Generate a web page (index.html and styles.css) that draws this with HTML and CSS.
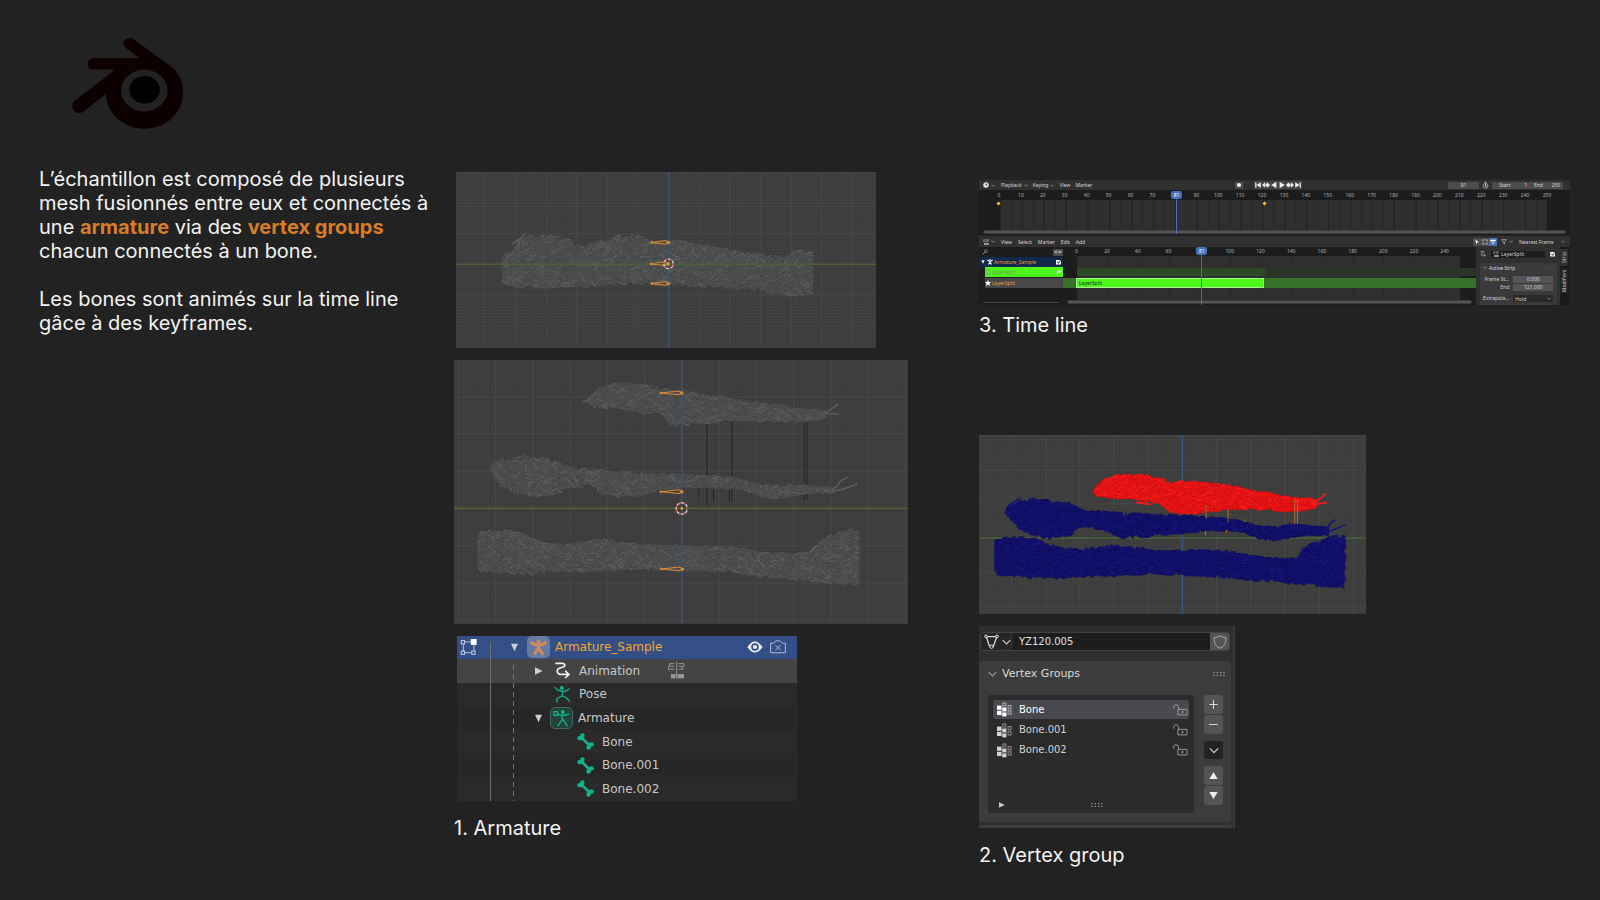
FILE: index.html
```html
<!DOCTYPE html>
<html lang="fr">
<head>
<meta charset="utf-8">
<title>Armature et vertex groups</title>
<link rel="stylesheet" href="styles.css">
</head>
<body>
<svg class="defs" aria-hidden="true">
  <symbol id="i-bone" viewBox="0 0 50 50"><path d="M15 15 L36 36" stroke="currentColor" stroke-width="8"/><g fill="currentColor"><circle cx="7" cy="15" r="6.500"/><circle cx="16" cy="7" r="6.500"/><circle cx="14" cy="15" r="7"/><circle cx="43" cy="34" r="6.500"/><circle cx="34" cy="43" r="6.500"/><circle cx="36" cy="36" r="7"/></g></symbol>
  <symbol id="i-man" viewBox="0 0 50 50"><circle cx="25" cy="7" r="6" fill="currentColor"/><path d="M2 9 L15 17 L35 17 L48 9 M25 18 V29 M24 28 L12 46 M26 28 L38 46" fill="none" stroke="currentColor" stroke-width="9"/></symbol>
  <symbol id="i-tri-d" viewBox="0 0 20 24"><path d="M0 1H20L10 23Z" fill="currentColor"/></symbol>
  <symbol id="i-tri-r" viewBox="0 0 22 22"><path d="M0 1V21L21 11Z" fill="currentColor"/></symbol>
  <symbol id="i-chev" viewBox="0 0 24 16"><path d="M2 3 L12 13 L22 3" fill="none" stroke="currentColor" stroke-width="3"/></symbol>
  <symbol id="i-grip" viewBox="0 0 36 16"><path d="M1 4H35M1 12H35" stroke="currentColor" stroke-width="4" stroke-dasharray="4 6"/></symbol>
  <symbol id="i-group" viewBox="0 0 46 44"><g fill="currentColor"><rect y="10" width="14" height="13"/><rect y="26" width="14" height="13"/><rect x="16" y="16" width="13" height="12"/><rect x="16" y="31" width="13" height="12"/></g><g fill="none" stroke="currentColor" stroke-width="3" opacity=".6"><rect x="18" y="2" width="9" height="9"/><rect x="34" y="10" width="9" height="10"/><rect x="34" y="26" width="9" height="10"/></g></symbol>
  <symbol id="i-lock" viewBox="0 0 46 36"><path d="M2 14 V9 Q2 2 9 2 Q17 2 17 9 V16 M15 16 H43 V33 H15 Z" fill="none" stroke="currentColor" stroke-width="3"/><path d="M29 21V28" stroke="currentColor" stroke-width="5"/></symbol>
  <symbol id="i-anim" viewBox="0 0 50 52"><path d="M3 4H24Q32 4 32 10Q32 15 24 16L15 19Q9 21 9 27Q9 38 20 38H44M33 27L45 38L33 49" fill="none" stroke="currentColor" stroke-width="5"/></symbol>
  <symbol id="i-nla" viewBox="0 0 50 52"><g fill="currentColor"><rect x="8" y="37" width="14" height="13"/><rect x="28" y="37" width="20" height="13"/><rect x="24" y="0" width="3" height="51"/></g><path d="M19 5H4V13H0V22H19M31 5H48V13H44V22H31M6 13H18M32 13H44" fill="none" stroke="currentColor" stroke-width="3"/></symbol>
  <symbol id="i-star" viewBox="0 0 20 20"><path d="M10 0 L13 7 L20 7 L15 12 L17 20 L10 15 L3 20 L5 12 L0 7 L7 7Z" fill="currentColor"/></symbol>
  <symbol id="i-pin" viewBox="0 0 20 20"><path d="M11 1L19 9L15 10L13 15L9 13L1 19L7 11L5 7L10 5Z" fill="currentColor"/></symbol>
</svg>

<header class="top">
  <svg class="logo" viewBox="210 110 345 280" role="img" aria-label="Blender">
    <path fill="#0c0000" fill-rule="evenodd" d="M403 118 L514 199 C538 219 550 246 550 275 C550 338 500 386 434 386 C368 386 318 338 318 281 L250 334 C228 350 203 322 224 302 L346 208 L280 208 C257 208 257 174 280 174 L419 174 L377 142 C360 127 380 104 403 118 Z M503 271 A70 63 0 1 0 363 271 A70 63 0 1 0 503 271 Z"/>
    <ellipse cx="434" cy="269" rx="46" ry="41.500"/>
  </svg>
</header>

<main class="board">
  <section class="intro">
    <p>L’échantillon est composé de plusieurs mesh fusionnés entre eux et connectés à une <strong>armature</strong> via des <strong>vertex groups</strong> chacun connectés à un bone.</p>
    <p>Les bones sont animés sur la time line gâce à des keyframes.</p>
  </section>

  <figure class="col col-armature">
    <svg class="view view-a" id="view-a" viewBox="48 36 1257 528"></svg>
    <svg class="view view-b" id="view-b" viewBox="42 30 1360 789"></svg>
    <div class="outliner">
      <div class="line selected">
        <svg class="ic16 objdata" viewBox="0 0 50 52"><path d="M9 9H38M9 9V42H42V16" fill="none" stroke="#b8c4dc" stroke-width="3"/><g fill="#334f86" stroke="#c8d2e4" stroke-width="3"><rect x="3" y="5" width="10" height="10"/><rect x="3" y="37" width="10" height="10"/><rect x="35" y="37" width="10" height="10"/></g><rect x="32" y="0" width="18" height="18" fill="#fff"/></svg>
        <svg class="tri tri1"><use href="#i-tri-d"/></svg>
        <span class="badge orange"><svg class="ic16"><use href="#i-man"/></svg></span>
        <span class="name">Armature_Sample</span>
        <span class="tools">
          <svg class="eye" viewBox="0 0 46 34"><path d="M1 17Q22 -15 45 17Q22 49 1 17Z" fill="#eee"/><circle cx="23" cy="17" r="11" fill="#334f86"/><circle cx="23" cy="17" r="6" fill="#eee"/></svg>
          <svg class="cam" viewBox="0 0 50 42"><path d="M2 9H12L18 2H32L38 9H48V39H2Z M17 15L33 31M33 15L17 31" fill="none" stroke="#b4bfd6" stroke-width="3"/></svg>
        </span>
      </div>
      <div class="line hover d1"><svg class="tri tri-r"><use href="#i-tri-r"/></svg><svg class="ic16 white"><use href="#i-anim"/></svg><span class="name">Animation</span><svg class="ic16 nla"><use href="#i-nla"/></svg></div>
      <div class="line d1 leaf"><svg class="ic16 green" viewBox="0 0 50 52"><circle cx="23" cy="6" r="6" fill="currentColor"/><path d="M1 3L9 12L24 16L33 17L46 8M26 16L24 30L9 38L7 51M24 30L36 35L48 48" fill="none" stroke="currentColor" stroke-width="4"/></svg><span class="name">Pose</span></div>
      <div class="line odd d1"><svg class="tri"><use href="#i-tri-d"/></svg><span class="badge teal"><svg class="ic16" viewBox="0 0 50 52"><circle cx="29" cy="6" r="6" fill="currentColor"/><path d="M2 5H13V16H2ZM13 12L22 16H36L49 12M27 16V30L13 50M29 28L43 50" fill="none" stroke="currentColor" stroke-width="4"/></svg></span><span class="name">Armature</span></div>
      <div class="line d2"><svg class="ic16 green"><use href="#i-bone"/></svg><span class="name">Bone</span></div>
      <div class="line odd d2"><svg class="ic16 green"><use href="#i-bone"/></svg><span class="name">Bone.001</span></div>
      <div class="line d2"><svg class="ic16 green"><use href="#i-bone"/></svg><span class="name">Bone.002</span></div>
    </div>
    <figcaption>1. Armature</figcaption>
  </figure>

  <div class="col col-right">
    <figure class="time">
      <div class="editor">
        <div class="bar">
          <button class="mini clock" aria-label="Editeur"><svg viewBox="0 0 20 20"><circle cx="10" cy="10" r="9" fill="#eee"/><path d="M10 4V11L14 8" stroke="#222" stroke-width="3" fill="none"/></svg><svg class="dn"><use href="#i-chev"/></svg></button>
          <button class="mini">Playback <svg class="dn"><use href="#i-chev"/></svg></button>
          <button class="mini">Keying <svg class="dn"><use href="#i-chev"/></svg></button>
          <button class="mini">View</button>
          <button class="mini">Marker</button>
          <button class="mini rec" aria-label="Auto keying"><svg viewBox="0 0 20 20"><circle cx="10" cy="10" r="7" fill="#eee"/></svg></button>
          <span class="play">
            <button aria-label="Début"><svg viewBox="0 0 20 20"><path d="M3 3H6V17H3ZM17 3V17L6 10Z" fill="#eee"/></svg></button>
            <button aria-label="Image clé précédente"><svg viewBox="0 0 20 20"><path d="M8 3V17L0 10ZM14 4L20 10L14 16L8 10Z" fill="#eee"/></svg></button>
            <button aria-label="Lecture arrière"><svg viewBox="0 0 20 20"><path d="M16 2V18L3 10Z" fill="#eee"/></svg></button>
            <button aria-label="Lecture"><svg viewBox="0 0 20 20"><path d="M4 2V18L17 10Z" fill="#eee"/></svg></button>
            <button aria-label="Image clé suivante"><svg viewBox="0 0 20 20"><path d="M12 3V17L20 10ZM6 4L12 10L6 16L0 10Z" fill="#eee"/></svg></button>
            <button aria-label="Fin"><svg viewBox="0 0 20 20"><path d="M17 3H14V17H17ZM3 3V17L14 10Z" fill="#eee"/></svg></button>
          </span>
          <span class="grow"></span>
          <input class="num cur" aria-label="Image" value="81">
          <svg class="watch" viewBox="0 0 20 20"><circle cx="10" cy="11" r="7" fill="none" stroke="#bbb" stroke-width="2"/><path d="M7 1H13M10 6V12H14" stroke="#bbb" stroke-width="3" fill="none"/></svg>
          <label class="num pair">Start <input value="1"></label>
          <label class="num pair last">End <input value="250"></label>
        </div>
        <div class="ruler ruler-top" id="ruler-top"></div>
        <div class="tracks"><div class="range"></div><i class="key k0"></i><i class="key k1"></i></div>
        <div class="scroll"></div>
        <div class="head head-top"><span>81</span></div>
      </div>
      <div class="editor nla-editor">
        <div class="bar">
          <button class="mini clock" aria-label="Editeur"><svg><use href="#i-nla"/></svg><svg class="dn"><use href="#i-chev"/></svg></button>
          <button class="mini">View</button><button class="mini">Select</button><button class="mini">Marker</button><button class="mini">Edit</button><button class="mini">Add</button>
          <span class="grow"></span>
          <button class="mini tool" aria-label="Select"><svg viewBox="0 0 20 20"><path d="M4 2L17 11L11 12L8 18Z" fill="#fff"/></svg></button>
          <button class="mini tool" aria-label="Box"><svg viewBox="0 0 20 20"><path d="M3 8V3H8M12 3H17V8M17 12V17H12M8 17H3V12" fill="none" stroke="#ccc" stroke-width="3"/></svg></button>
          <button class="mini tool on" aria-label="Snap"><svg viewBox="0 0 20 20"><path d="M1 5H19" stroke="#fff" stroke-width="5"/><circle cx="10" cy="13" r="3" fill="none" stroke="#fff" stroke-width="2"/></svg></button>
          <button class="mini filt" aria-label="Filter"><svg viewBox="0 0 20 20"><path d="M2 2H18L12 10V17L8 14V10Z" fill="none" stroke="#ccc" stroke-width="2"/></svg><svg class="dn"><use href="#i-chev"/></svg></button>
          <select class="snap" aria-label="Snap"><option>Nearest Frame</option></select><svg class="dn snap-dn"><use href="#i-chev"/></svg>
        </div>
        <div class="nla-body">
          <div class="channels">
            <div class="search"><svg viewBox="0 0 20 20"><circle cx="13" cy="7" r="5" fill="none" stroke="#aaa" stroke-width="2"/><path d="M9 11L2 18" stroke="#aaa" stroke-width="3"/></svg><button class="swap" aria-label="Inverser"><svg viewBox="0 0 20 12"><path d="M2 6H18M6 2L2 6L6 10M14 2L18 6L14 10" fill="none" stroke="#ccc" stroke-width="2"/></svg></button></div>
            <div class="ch ch-arm"><svg class="t"><use href="#i-tri-d"/></svg><svg><use href="#i-man"/></svg><span>Armature_Sample</span><input type="checkbox" checked aria-label="Armature_Sample"></div>
            <div class="ch ch-green"><svg><use href="#i-nla"/></svg><span>LayerSplit</span><svg class="pin"><use href="#i-pin"/></svg></div>
            <div class="ch ch-star"><svg><use href="#i-star"/></svg><span>LayerSplit</span></div>
            <div class="ch-scroll"></div>
          </div>
          <div class="strips">
            <div class="ruler ruler-low" id="ruler-low"></div>
            <div class="strip-area">
              <div class="range"></div>
              <div class="lane ghost"><i></i></div>
              <div class="lane full"><b>LayerSplit</b></div>
            </div>
            <div class="scroll"></div>
            <div class="head head-low"><span>81</span></div>
          </div>
          <aside class="side">
            <div class="side-main">
              <div class="side-top"><svg><use href="#i-anim"/></svg><label class="sf"><svg><use href="#i-nla"/></svg><input value="LayerSplit" aria-label="Strip"></label><input type="checkbox" checked aria-label="Actif"></div>
              <div class="card">
                <div class="card-h"><svg class="dn"><use href="#i-chev"/></svg>Active Strip<svg class="g"><use href="#i-grip"/></svg></div>
                <label class="f">Frame St... <input value="0.000"></label>
                <label class="f">End <input value="121.000"></label>
                <label class="f ext">Extrapola... <select><option>Hold</option></select><svg class="dn"><use href="#i-chev"/></svg></label>
              </div>
            </div>
            <div class="tabs"><button class="on">Strip</button><button>Modifiers</button></div>
          </aside>
        </div>
      </div>
      <figcaption>3. Time line</figcaption>
    </figure>

    <figure class="vertex">
      <svg class="view view-c" id="view-c" viewBox="27 30 1161 537"></svg>
      <div class="props">
        <div class="idrow">
          <button class="idtype" aria-label="Mesh"><svg class="meshic" viewBox="0 0 46 46"><path d="M7 8H39L29 38H17Z" fill="none" stroke="#ddd" stroke-width="4"/><g fill="#222" stroke="#eee" stroke-width="3"><circle cx="6" cy="7" r="4"/><circle cx="40" cy="7" r="4"/><circle cx="23" cy="39" r="5"/></g></svg><svg class="chev"><use href="#i-chev"/></svg></button>
          <input class="idname" aria-label="Nom" value="YZ120.005">
          <button class="shield" aria-label="Fake user"><svg viewBox="0 0 40 42"><path d="M20 2Q28 8 38 8Q39 32 20 40Q1 32 2 8Q12 8 20 2Z" fill="none" stroke="#aaa" stroke-width="3"/></svg></button>
        </div>
        <div class="panel">
          <div class="panel-h"><svg class="chev"><use href="#i-chev"/></svg><span>Vertex Groups</span><svg class="grip"><use href="#i-grip"/></svg></div>
          <div class="panel-b">
            <div class="list">
              <div class="item on"><svg class="gi"><use href="#i-group"/></svg><span>Bone</span><svg class="lk"><use href="#i-lock"/></svg></div>
              <div class="item"><svg class="gi"><use href="#i-group"/></svg><span>Bone.001</span><svg class="lk"><use href="#i-lock"/></svg></div>
              <div class="item"><svg class="gi"><use href="#i-group"/></svg><span>Bone.002</span><svg class="lk"><use href="#i-lock"/></svg></div>
              <div class="list-f"><svg class="more"><use href="#i-tri-r"/></svg><svg class="grip"><use href="#i-grip"/></svg></div>
            </div>
            <div class="side-btns">
              <div class="pair-btns"><button aria-label="Ajouter"><svg viewBox="0 0 26 26"><path d="M13 1V25M1 13H25" stroke="#ddd" stroke-width="3"/></svg></button><button aria-label="Retirer"><svg viewBox="0 0 26 26"><path d="M0 13H26" stroke="#ccc" stroke-width="3"/></svg></button></div>
              <button class="menu" aria-label="Options"><svg class="chev"><use href="#i-chev"/></svg></button>
              <div class="pair-btns"><button aria-label="Monter"><svg viewBox="0 0 26 22"><path d="M13 1L25 21H1Z" fill="#eee"/></svg></button><button aria-label="Descendre"><svg viewBox="0 0 26 22"><path d="M13 21L25 1H1Z" fill="#eee"/></svg></button></div>
            </div>
          </div>
        </div>
        <div class="panel-next"></div>
      </div>
      <figcaption>2. Vertex group</figcaption>
    </figure>
  </div>
</main>
<script src="views.js"></script>
</body>
</html>
```
FILE: styles.css
```css
* { box-sizing: border-box; }
body { margin: 0; background: #222; color: #f4f4f4; font: 20px/24px Inter, "Liberation Sans", sans-serif; }
figure, p { margin: 0; }
button, input, select { font: inherit; color: inherit; border: 0; padding: 0; margin: 0; background: none; border-radius: 0; appearance: none; min-width: 0; }
svg { display: block; flex: none; }
.defs { position: absolute; width: 0; height: 0; }

.top { padding: 37px 0 0 70px; }
.logo { width: 115px; height: 93px; }
.board { display: grid; grid-template-columns: 415fr 525fr 591fr; padding: 37px 30px 20px 39px; }
.intro { padding-right: 18px; }
.intro p + p { margin-top: 24px; padding-right: 20px; }
.intro strong { color: #d97d26; font-weight: 700; }

.col-armature { padding-top: 5px; }
.view { height: auto; background: #3c3c3c; }
.view-a { width: 80%; margin-left: 2px; }
.view-b { width: 86.4%; margin-top: 12px; }
figcaption { margin-top: 15px; }

/* outliner */
.outliner { display: grid; grid-auto-rows: 1fr; height: 165px; width: 340px; max-width: 100%; margin: 12px 0 0 3px; background: #2a2a2a; color: #c8c8c8; font: 12px/16px "DejaVu Sans", sans-serif; position: relative; overflow: hidden; }
.outliner::before { content: ""; position: absolute; left: 33px; top: 6px; bottom: 0; width: 1px; background: #707070; z-index: 1; }
.outliner::after { content: ""; position: absolute; left: 56px; top: 29px; bottom: 0; width: 1px; background: repeating-linear-gradient(#777 0 5px, transparent 5px 9px); }
.line { display: flex; align-items: center; }
.line.odd { background: #272727; }
.line.hover { background: #444; }
.line.selected { background: #334f86; color: #f2a72c; padding-left: 3px; }
.ic16 { width: 17px; height: 17px; }
.tri { width: 7px; height: 9px; color: #ccc; }
.tri1 { margin-left: 34px; }
.badge { display: grid; place-items: center; width: 23px; height: 22px; border-radius: 5px; }
.orange { background: #677aa1; color: #d28c5e; margin: 0 5px 0 9px; }
.teal { background: #22443b; border: 1px solid #45685e; color: #12b28a; margin: 0 5px 0 8px; }
.tools { margin-left: auto; display: flex; gap: 7px; padding-right: 11px; }
.eye { width: 16px; height: 14px; }
.cam { width: 16px; height: 14px; }
.d1 { padding-left: 78px; }
.d1 .ic16.white, .leaf .green { margin: 0 8px 0 11px; }
.d1 .tri-r { width: 8px; height: 8px; }
.leaf { padding-left: 86px; }
.white { color: #f0f0f0; }
.green { color: #12b28a; }
.d1 .nla { color: #999; margin-left: 28px; }
.d2 { padding-left: 120px; }
.d2 .green { margin-right: 8px; }

/* timeline */
.col-right { padding-top: 13px; }
.time { font: 5px/8px "Noto Sans", sans-serif; color: #d4d4d4; }
.time figcaption { font: 20px/24px Inter, sans-serif; color: #f4f4f4; margin-top: 8px; }
.editor { position: relative; background: #1c1c1c; overflow: hidden; }
.bar { display: flex; align-items: center; height: 10px; background: #303030; padding: 0 4px; }
.mini { display: flex; align-items: center; gap: 2px; height: 8px; margin-right: 5px; white-space: nowrap; }
.mini svg { width: 6px; height: 6px; }
.mini .dn, .dn { width: 4px; height: 3px; }
.clock { margin-right: 6px; }
.grow { flex: 1; }
.rec { margin-left: 138px; background: #4c4c4c; padding: 0 1px; margin-right: 11px; height: 7px; }
.play { display: flex; background: #444; }
.play svg { width: 8px; height: 8px; }
.num { background: #4c4c4c; height: 7px; line-height: 7px; text-align: center; }
.cur { width: 31px; margin-right: 3px; }
.watch { width: 7px; height: 7px; margin: 0 3px 0 0; }
.pair { display: flex; justify-content: space-between; width: 38px; padding: 0 3px 0 7px; align-items: center; }
.pair input { width: 10px; text-align: right; height: 7px; }
.last { width: 33px; padding-left: 4px; margin-right: 3px; }
.ruler { display: grid; grid-auto-flow: column; grid-auto-columns: 1fr; text-align: center; height: 10px; color: #b0b0b0; line-height: 10px; }
.ruler-top { margin: 0 12px 0 9px; }
.tracks { height: 30px; position: relative; display: flex; padding: 0 23px 0 21px; }
.range { flex: 1; background: linear-gradient(to right, #222 1px, transparent 1px) 0 0 / 4% 100%, linear-gradient(to right, #282828 1px, transparent 1px) 0 0 / 2% 100%, #2f2f2f; }
.key { position: absolute; top: 2px; width: 3px; height: 3px; background: #f3c03a; transform: rotate(45deg); }
.k0 { left: 3%; } .k1 { left: 48%; }
.scroll { height: 4px; margin: 0 4px 1px; border-radius: 2px; background: #555; border: 1px solid #3a3a3a; }
.head { position: absolute; width: 1px; background: #4472b8; color: #fff; }
.head span { position: absolute; left: -5px; top: 0; width: 11px; height: 8px; border-radius: 2px; background: #4472b8; text-align: center; }
.head-top { left: 33%; top: 11px; bottom: 1px; margin-left: 2px; }
.head-low { left: 34%; top: 0; bottom: 0; margin-left: -2px; }
.nla-editor { margin-top: 1px; }
.nla-editor > .bar { height: 11px; }
.nla-editor > .bar .mini { margin-right: 6px; }
.nla-editor > .bar .tool { margin: 0; padding: 0 1px; background: #4c4c4c; }
.nla-editor > .bar .tool.on { background: #4472b8; }
.nla-editor > .bar .filt { margin: 0 6px 0 4px; }
.snap { width: 42px; }
.snap-dn { margin-right: 1px; }
.nla-body { display: grid; grid-template-columns: 84px 1fr 94px; height: 58px; }
.channels { display: flex; flex-direction: column; }
.channels svg { width: 6px; height: 6px; }
.search { height: 10px; display: flex; justify-content: space-between; align-items: center; padding-left: 3px; }
.swap { width: 10px; height: 7px; background: #4c4c4c; padding-left: 1px; }
.search .swap svg { width: 8px; }
.ch { height: 10px; display: flex; align-items: center; gap: 1px; color: #fff; }
.ch span { flex: 1; color: #ee9c2e; }
.ch-arm { background: #11294c; padding-left: 2px; }
.channels .t { width: 4px; height: 4px; margin-right: 1px; }
input[type="checkbox"] { width: 5px; height: 5px; background: #fff; clip-path: polygon(0 0, 100% 0, 50% 60%, 25% 40%, 20% 55%, 50% 85%, 100% 20%, 100% 100%, 0 100%); margin-right: 2px; }
.ch-green { background: #4ef71b; margin-left: 6px; color: #7ba86b; padding-right: 1px; }
.ch-green span { color: #6f8f62; }
.ch-green .pin { color: #fff; }
.ch-star { background: #484848; margin: 1px 0 0 6px; }
.ch-scroll { height: 1px; background: #444; margin: 14px 4px 0; }
.strips { position: relative; display: flex; flex-direction: column; overflow: hidden; }
.ruler-low { margin: 0 16px 0 -2px; height: 9px; line-height: 9px; }
.strip-area { position: relative; flex: 1; display: flex; padding: 0 16px 0 14px; }
.strip-area .range { background: linear-gradient(to right, #292929 1px, transparent 1px) 0 0 / 8% 100%, #2f2f2f; }
.lane { position: absolute; left: 0; right: 0; height: 8px; }
.ghost { top: 12px; background: #2a3528; margin-left: 14px; }
.ghost i { display: block; width: 47%; height: 8px; background: #2d4a24; }
.full { top: 22px; height: 10px; background: #37702a; padding-left: 13px; }
.full b { display: block; font-weight: 400; width: 47%; height: 10px; background: #4ef71b; border: 1px solid #a8f58e; color: #123; padding-left: 2px; }
.side { display: grid; grid-template-columns: 1fr 10px; overflow: hidden; background: #2a2a2a; }
.side-main { padding: 3px 3px 0 4px; background: #303030; }
.side-top { display: flex; align-items: center; height: 8px; gap: 5px; }
.side svg { width: 6px; height: 6px; }
.side .dn { width: 4px; height: 3px; }
.sf { display: flex; align-items: center; gap: 2px; flex: 1; background: #1d1d1d; height: 7px; min-width: 0; padding-left: 2px; }
.sf input { width: 40px; height: 7px; }
.card { background: #3a3a3a; margin-top: 5px; height: 44px; padding: 1px 4px 0 3px; }
.card-h { display: flex; align-items: center; gap: 2px; height: 7px; margin-bottom: 4px; color: #ddd; }
.side .g { margin-left: auto; width: 6px; height: 3px; color: #666; }
.f { display: flex; align-items: center; justify-content: flex-end; gap: 4px; height: 8px; position: relative; }
.f input, .f select { width: 40px; height: 7px; background: #545454; text-align: center; }
.f select { background: #282828; text-align: left; padding-left: 2px; }
.ext { margin-top: 3px; }
.ext .dn { position: absolute; right: 2px; top: 3px; }
.tabs { background: #1a1a1a; display: flex; flex-direction: column; gap: 2px; padding: 2px 2px 0 0; }
.tabs button { writing-mode: vertical-rl; transform: rotate(180deg); background: #222; height: 26px; width: 8px; line-height: 8px; }
.tabs .on { background: #303030; height: 17px; }

/* vertex groups */
.vertex { margin-top: 98px; }
.view-c { width: 65.5%; }
.props { width: 256px; max-width: 100%; margin-top: 12px; padding: 6px 3px 0 1px; background: #2f2f2f; border-right: 2px solid #3a3a3a; font: 10px/14px "DejaVu Sans", sans-serif; color: #d4d4d4; }
.idrow { display: flex; height: 19px; border: 1px solid #414141; border-radius: 3px; background: #1d1d1d; overflow: hidden; }
.idtype { width: 31px; display: flex; align-items: center; gap: 3px; padding-left: 3px; background: #262626; border-right: 1px solid #383838; }
.meshic { width: 15px; height: 15px; }
.chev { width: 9px; height: 6px; color: #ccc; }
.idname { flex: 1; padding-left: 7px; color: #e0e0e0; }
.shield { width: 19px; background: #545454; display: grid; place-items: center; }
.shield svg { width: 14px; height: 14px; }
.panel { background: #3c3c3c; border-radius: 3px; margin: 10px -1px 0 -1px; padding: 0 8px 9px 9px; }
.panel-h { display: flex; align-items: center; height: 25px; gap: 5px; font-size: 11px; color: #dadada; }
.panel-h .chev { color: #999; }
.grip { width: 12px; height: 6px; color: #999; }
.panel-h .grip { margin-left: auto; margin-right: -2px; }
.panel-b { display: flex; gap: 10px; margin-top: 9px; }
.list { flex: 1; background: #2b2b2b; border-radius: 3px; height: 118px; padding: 5px; display: flex; flex-direction: column; }
.item { height: 20px; display: flex; align-items: center; padding: 0 1px 0 4px; }
.item.on { background: #494a50; border-radius: 3px; color: #fff; height: 19px; margin-bottom: 1px; }
.gi { width: 15px; height: 15px; margin-right: 7px; }
.lk { width: 15px; height: 12px; margin-left: auto; color: #999; }
.list-f { margin-top: auto; display: flex; align-items: center; padding-left: 6px; }
.more { width: 6px; height: 6px; color: #ccc; }
.list-f .grip { margin: 0 auto; }
.side-btns { width: 19px; display: flex; flex-direction: column; gap: 7px; }
.side-btns button { display: grid; place-items: center; height: 19px; width: 19px; background: #545454; border-radius: 3px; }
.side-btns button svg { width: 9px; height: 9px; }
.side-btns .menu { background: #232323; height: 18px; }
.side-btns .menu svg { width: 10px; height: 7px; }
.pair-btns { display: grid; gap: 1px; }
.panel-next { height: 3px; background: #3c3c3c; margin: 3px -1px 0; }
```
FILE: views.js
```javascript
// Viewport drawings: grid, axes, tangled mesh bands and bones.
let seed = 7;
function rnd() {
  seed = (seed + 0x6d2b79f5) | 0;
  let t = Math.imul(seed ^ (seed >>> 15), 1 | seed);
  t = (t + Math.imul(t ^ (t >>> 7), 61 | t)) ^ t;
  return ((t ^ (t >>> 14)) >>> 0) / 4294967296;
}

// base fill, shadow side of a strand, lit side tones
const GREY = ['#4b4d4d', '#404141', ['#515353', '#5a5c5c', '#4e5050']];
const BLUE = ['#101068', '#0d0d54', ['#121270', '#151578', '#11116a']];
const RED = ['#dc1212', '#c00e0e', ['#ee1616', '#fb1a1a', '#e61414']];

function edges(points, x) {
  for (let i = 1; i < points.length; i++) {
    const [x0, t0, b0] = points[i - 1];
    const [x1, t1, b1] = points[i];
    if (x <= x1) {
      const k = (x - x0) / (x1 - x0);
      return [t0 + (t1 - t0) * k, b0 + (b1 - b0) * k];
    }
  }
  return points[points.length - 1].slice(1);
}

function mesh(points, [base, shadow, lit], density, twigs) {
  const first = points[0][0];
  const last = points[points.length - 1][0];
  const top = [];
  const bottom = [];
  for (let x = first; x <= last; x += 5) {
    const [t, b] = edges(points, x);
    const inset = Math.min(4, (b - t) / 4);
    top.push(`${x} ${(t + inset + rnd() * 8 - 4).toFixed(1)}`);
    bottom.unshift(`${x} ${(b - inset + rnd() * 8 - 4).toFixed(1)}`);
  }
  let out = `<path d="M${top.concat(bottom).join('L')}Z" fill="${base}"/>`;
  const passes = 30;
  const count = Math.round((last - first) * density);
  for (let pass = 0; pass < passes; pass++) {
    let d = '';
    for (let i = 0; i < count / passes; i++) {
      const x = first + 2 + rnd() * (last - first - 14);
      const [t, b] = edges(points, x);
      const y = t + rnd() * (b - t);
      const dx = 4 + rnd() * 20;
      const dy = (rnd() - 0.5) * 34;
      const x2 = Math.min(last - 2, x + dx);
      const [t2, b2] = edges(points, x2);
      const y2 = Math.max(t2 - 5 + rnd() * 6, Math.min(b2 + 5 - rnd() * 6, y + dy));
      const bend = (rnd() - 0.5) * 16;
      d += `M${x.toFixed(1)} ${y.toFixed(1)}Q${(x + dx / 2).toFixed(1)} ${((y + y2) / 2 + bend).toFixed(1)} ${x2.toFixed(1)} ${y2.toFixed(1)}`;
    }
    out += `<g fill="none" stroke-linecap="round"><path d="${d}" stroke="${shadow}" stroke-width="7" opacity=".7"/><path d="${d}" stroke="${lit[pass % 3]}" stroke-width="5"/></g>`;
  }
  if (twigs) out += `<path d="${twigs}" fill="none" stroke="${lit[1]}" stroke-width="5" stroke-linecap="round" stroke-linejoin="round"/>`;
  return out;
}

function grid(id, ox, oy, step, box) {
  const [x, y, w, h] = box;
  const small = step / 10;
  return `<defs>
    <pattern id="${id}-s" x="${ox}" y="${oy}" width="${small}" height="${small}" patternUnits="userSpaceOnUse"><path d="M0 0H${small}M0 0V${small}" stroke="#494949" stroke-width="3"/></pattern>
    <pattern id="${id}-l" x="${ox - 2}" y="${oy - 2}" width="${step}" height="${step}" patternUnits="userSpaceOnUse"><path d="M0 2H${step}M2 0V${step}" stroke="#505050" stroke-width="3"/></pattern>
  </defs>
  <rect x="${x}" y="${y}" width="${w}" height="${h}" fill="url(#${id}-s)" opacity=".6"/>
  <rect x="${x}" y="${y}" width="${w}" height="${h}" fill="url(#${id}-l)" opacity=".5"/>`;
}

function axes(ox, oy, box, green) {
  const [x, y, w, h] = box;
  return `<path d="M${x} ${oy}H${x + w}" stroke="${green}" stroke-width="4"/><path d="M${ox} ${y}V${y + h}" stroke="#35577f" stroke-width="4"/>`;
}

function bone(x, y, w) {
  return `<path d="M${x} ${y}L${x + w - 8} ${y - 6}L${x + w} ${y}L${x + w - 8} ${y + 5}Z" fill="none" stroke="#d98a35" stroke-width="3"/><circle cx="${x + 2}" cy="${y}" r="4" fill="#d98a35"/><circle cx="${x + w}" cy="${y}" r="5" fill="#d98a35"/>`;
}

function cursor(x, y, r) {
  return `<circle cx="${x}" cy="${y}" r="${r}" fill="none" stroke="#ddd" stroke-width="4"/><circle cx="${x}" cy="${y}" r="${r}" fill="none" stroke="#b33" stroke-width="4" stroke-dasharray="7 7"/><circle cx="${x}" cy="${y}" r="4" fill="#f0a020"/>`;
}

const boxA = [48, 36, 1257, 528];
document.getElementById('view-a').innerHTML = grid('a', 685, 312, 91.5, boxA)
  + mesh([[185, 285, 370], [215, 278, 375], [235, 235, 378], [280, 228, 378], [330, 228, 380], [380, 240, 378], [430, 262, 376], [480, 245, 374], [520, 230, 370], [590, 228, 368], [630, 243, 372], [720, 242, 372], [780, 257, 378], [850, 267, 378], [900, 280, 385], [960, 287, 390], [1030, 294, 400], [1060, 272, 403], [1118, 272, 405]], GREY, 2.6, 'M218 250L240 235L232 262M240 235L256 222')
  + axes(685, 312, boxA, '#4b6234')
  + bone(632, 247, 52) + bone(630, 311, 52) + bone(632, 370, 52) + cursor(684, 311, 14);

const boxB = [42, 30, 1360, 789];
document.getElementById('view-b').innerHTML = grid('b', 725, 475, 111.7, boxB)
  + '<path d="M801 200V466M875 200V455M1092 180V450M1100 180V448M776 410V442M820 415V455M868 415V456" stroke="#252525" stroke-width="3"/>'
  + mesh([[440, 148, 158], [480, 115, 172], [540, 100, 172], [600, 104, 188], [660, 117, 188], [690, 122, 225], [740, 124, 220], [800, 135, 215], [870, 147, 208], [930, 158, 210], [1000, 165, 210], [1060, 177, 213], [1130, 184, 208], [1160, 187, 196]], GREY, 1.8, 'M430 156L450 148M1155 190L1165 182L1192 164M1160 190L1194 192')
  + mesh([[150, 348, 358], [180, 328, 408], [240, 320, 435], [300, 324, 440], [350, 337, 430], [390, 355, 408], [460, 362, 403], [480, 362, 430], [540, 367, 438], [600, 372, 433], [660, 376, 420], [720, 374, 410], [800, 380, 408], [870, 384, 412], [930, 400, 422], [970, 410, 438], [1020, 410, 443], [1080, 407, 428], [1140, 414, 422], [1180, 416, 424]], GREY, 1.5, 'M1175 420L1190 408L1205 390L1222 382M1180 424L1215 415L1250 402')
  + mesh([[112, 545, 655], [160, 545, 665], [220, 545, 668], [270, 562, 668], [310, 582, 665], [370, 585, 660], [430, 577, 662], [490, 572, 658], [560, 582, 655], [640, 590, 655], [720, 590, 658], [800, 592, 658], [870, 592, 660], [930, 602, 672], [1000, 612, 678], [1060, 614, 685], [1100, 610, 690], [1130, 580, 692], [1200, 542, 700], [1257, 538, 702]], GREY, 2.6)
  + axes(725, 475, boxB, '#4f6a2c')
  + bone(660, 129, 65) + bone(660, 425, 65) + bone(662, 657, 65) + cursor(725, 475, 17);

const boxC = [27, 30, 1161, 537];
document.getElementById('view-c').innerHTML = grid('c', 637, 339, 102.6, boxC)
  + axes(637, 339, boxC, '#4b6234')
  + mesh([[105, 253, 262], [145, 227, 308], [190, 224, 333], [240, 230, 340], [300, 237, 328], [340, 262, 300], [400, 262, 316], [450, 267, 335], [520, 270, 333], [580, 274, 325], [650, 274, 320], [700, 280, 313], [760, 282, 312], [820, 294, 316], [860, 307, 335], [910, 310, 343], [960, 302, 333], [1020, 307, 326], [1075, 312, 324]], BLUE, 1.8, 'M120 240L150 220M1065 318L1085 290L1095 285M1070 322L1125 300')
  + mesh([[73, 342, 445], [120, 342, 450], [190, 342, 455], [230, 360, 455], [280, 374, 455], [340, 376, 450], [430, 364, 450], [500, 372, 445], [570, 382, 443], [650, 380, 448], [720, 380, 450], [780, 382, 455], [830, 394, 460], [900, 402, 465], [980, 404, 472], [1000, 370, 475], [1060, 342, 482], [1127, 332, 485]], BLUE, 2.6)
  + mesh([[368, 197, 204], [400, 167, 213], [440, 153, 217], [520, 152, 225], [570, 164, 236], [600, 174, 260], [660, 170, 264], [720, 176, 257], [780, 186, 249], [830, 196, 250], [900, 209, 251], [960, 220, 257], [1020, 224, 249], [1040, 229, 240]], RED, 2.2, 'M1025 235L1050 222L1066 206M1030 238L1068 233M500 232L540 238')
  + '<path d="M708 240V280M706 318V332M774 252V290M769 314V324M974 224V298M982 224V298M825 283V290" stroke="#b0702c" stroke-width="3"/>';

function ruler(id, step, count) {
  const el = document.getElementById(id);
  for (let i = 0; i < count; i++) {
    const s = document.createElement('span');
    s.textContent = i * step;
    el.append(s);
  }
}
ruler('ruler-top', 10, 26);
ruler('ruler-low', 20, 13);
```
